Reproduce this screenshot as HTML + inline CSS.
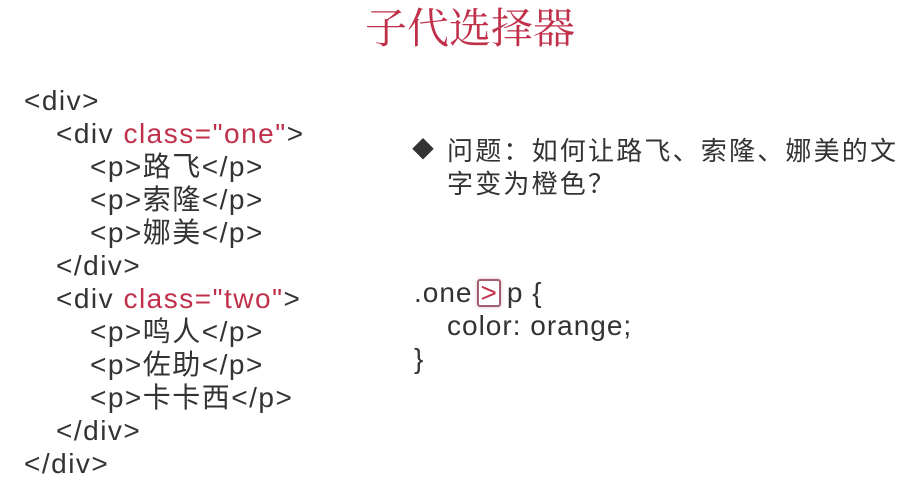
<!DOCTYPE html>
<html><head><meta charset="utf-8"><style>
body{margin:0;width:916px;height:489px;background:#fff;overflow:hidden;position:relative;font-family:"Liberation Sans","Noto Sans CJK SC",sans-serif;color:#333;}
.l{position:absolute;font-size:28px;line-height:33px;white-space:nowrap;letter-spacing:1.5px;}
.c{letter-spacing:1px;}
.q{font-family:"Noto Sans CJK SC",sans-serif;letter-spacing:2.2px;font-size:26px;}
.r{color:#c0304a;}
.t{position:absolute;left:0;width:940px;text-align:center;top:2px;font-size:42px;line-height:48px;color:#c0304a;font-family:"Noto Serif CJK SC","Noto Sans CJK SC",serif;}
.box{display:inline-block;border:2px solid #a06070;border-radius:3px;color:#c0304a;line-height:24px;padding:0 2px;margin:0 6px 0 4px;box-shadow:0 0 3px #d8b0b8;letter-spacing:0;}
</style></head><body>
<div class="t">子代选择器</div>
<div class="l" style="left:24px;top:84px">&lt;div&gt;</div>
<div class="l" style="left:56px;top:117px">&lt;div <span class="r">class="one"</span>&gt;</div>
<div class="l" style="left:90px;top:150px">&lt;p&gt;路飞&lt;/p&gt;</div>
<div class="l" style="left:90px;top:183px">&lt;p&gt;索隆&lt;/p&gt;</div>
<div class="l" style="left:90px;top:216px">&lt;p&gt;娜美&lt;/p&gt;</div>
<div class="l" style="left:56px;top:249px">&lt;/div&gt;</div>
<div class="l" style="left:56px;top:282px">&lt;div <span class="r">class="two"</span>&gt;</div>
<div class="l" style="left:90px;top:315px">&lt;p&gt;鸣人&lt;/p&gt;</div>
<div class="l" style="left:90px;top:348px">&lt;p&gt;佐助&lt;/p&gt;</div>
<div class="l" style="left:90px;top:381px">&lt;p&gt;卡卡西&lt;/p&gt;</div>
<div class="l" style="left:56px;top:414px">&lt;/div&gt;</div>
<div class="l" style="left:24px;top:447px">&lt;/div&gt;</div>
<div class="l" style="left:412px;top:133px;font-size:22px;">◆</div>
<div class="l q" style="left:447px;top:133px;">问题：如何让路飞、索隆、娜美的文</div>
<div class="l q" style="left:447px;top:166px;">字变为橙色？</div>
<div class="l c" style="left:414px;top:276px">.one<span class="box">&gt;</span>p {</div>
<div class="l c" style="left:447px;top:309px">color: orange;</div>
<div class="l c" style="left:414px;top:342px">}</div>
</body></html>
